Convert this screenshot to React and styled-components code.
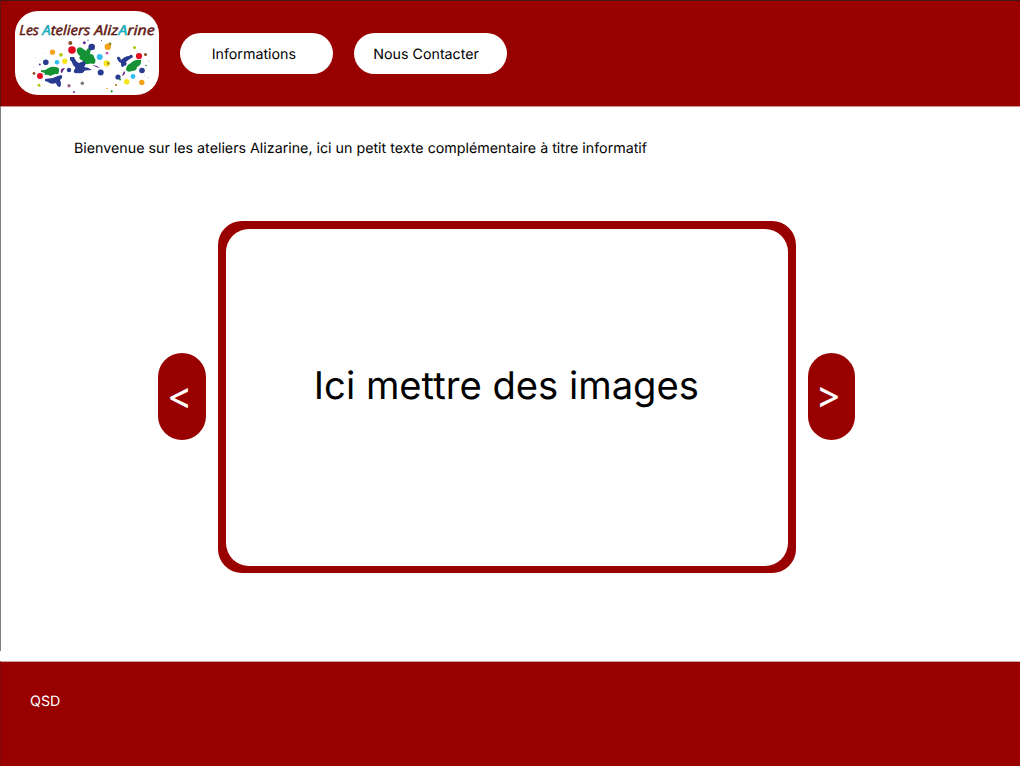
import React from "react";
import styled, { createGlobalStyle } from "styled-components";

const RED = "#990000";

const GlobalStyle = createGlobalStyle`
  * { box-sizing: border-box; }
  body {
    margin: 0;
    background: #fff;
    color: #000;
    font-family: Inter, "Liberation Sans", sans-serif;
    text-rendering: geometricPrecision;
  }
  button { text-rendering: inherit; }
`;

const Page = styled.div`
  display: flex;
  flex-direction: column;
  width: 1020px;
  height: 766px;
  overflow: hidden;
  background: linear-gradient(#808080, #808080) 0 0 / 1px 651px no-repeat, #fff;
`;

const Header = styled.header`
  display: flex;
  align-items: flex-start;
  flex: none;
  height: 107px;
  padding: 10px 0 0 14px;
  background: ${RED};
  border-top: 1px solid #431414;
  border-left: 1px solid #5c1414;
  border-bottom: 1px solid #d49393;
`;

const LogoCard = styled.a`
  display: block;
  width: 143.5px;
  height: 84px;
  border-radius: 23px;
  background: #fff;
  overflow: hidden;

  svg { display: block; }
`;

const Nav = styled.nav`
  display: flex;
  gap: 21px;
  margin: 22px 0 0 21.2px;
`;

const NavButton = styled.button`
  width: 153.3px;
  height: 41px;
  padding: 3px 0 0 ${(p) => p.$inset}px;
  border: 0;
  border-radius: 21px;
  background: #fff;
  color: #000;
  font: 400 14.25px/38px Inter, sans-serif;
  text-align: left;
  white-space: nowrap;
`;

const Main = styled.main`
  flex: 1;
  padding-top: 33px;
`;

const Intro = styled.p`
  margin: 0 0 0 74px;
  font-size: 14.25px;
  line-height: 18px;
  white-space: nowrap;
`;

const Carousel = styled.section`
  display: flex;
  align-items: center;
  gap: 12px;
  margin: 63px 0 0 158.3px;
`;

const Arrow = styled.button`
  width: 47.6px;
  height: 87px;
  margin-bottom: 2px;
  padding: ${(p) => p.$pad};
  border: 0;
  border-radius: 24px;
  background: ${RED};
  color: #fff;
  font: 400 38.2px/1 Inter, sans-serif;
  text-align: center;
`;

const Slide = styled.div`
  display: flex;
  justify-content: center;
  width: 578px;
  height: 352px;
  padding-top: 133px;
  border: 8px solid ${RED};
  border-bottom-width: 7px;
  border-radius: 24px;
  background: ${RED};
  position: relative;
  isolation: isolate;

  &::before {
    content: "";
    position: absolute;
    inset: 0;
    z-index: -1;
    border-radius: 23px;
    background: #fff;
  }
`;

const SlideText = styled.p`
  margin: 0 1px 0 0;
  font-size: 38.2px;
  line-height: 48px;
  white-space: nowrap;
`;

const Footer = styled.footer`
  flex: none;
  height: 105px;
  padding: 31px 0 0 29px;
  border-top: 1px solid #cfa5a5;
  border-left: 1px solid #800808;
  background: ${RED};
  color: #fff;
  font-size: 14.25px;
  line-height: 17px;
`;

const BLUE = "#293b90";
const GREEN = "#159235";
const PURPLE = "#6c2c91";
const CYAN = "#32bdf0";
const YELLOW = "#f7e51c";
const ORANGE = "#f5a21b";
const CRIMSON = "#e30b1f";
const BROWN = "#8c4e24";
const LIME = "#b7c60b";

const drops = [
  [70.3, 43, 2, BROWN], [72, 50, 3.8, CRIMSON], [52.5, 52.2, 2.6, ORANGE], [61, 54.8, 1.9, LIME],
  [84.3, 42.7, 1.5, PURPLE], [91.7, 47, 3.3, BLUE], [107.8, 46.7, 3.2, ORANGE], [110, 43.8, 1.4, "#8b8b12"],
  [45.8, 62.2, 2.8, BLUE], [57, 62.3, 2.3, CYAN], [64.8, 61.3, 2.7, YELLOW], [39.8, 64.6, 1, PURPLE],
  [99.7, 57, 3, CYAN], [107, 53.2, 1.4, "#c45bad"], [106.7, 63.4, 3.1, YELLOW], [108.3, 63.4, 1.3, "#9b9034"],
  [34, 73.4, 1.4, BROWN], [40, 76, 3, CRIMSON], [39, 85.3, 1.5, LIME], [69, 70, 2.2, BLUE],
  [100.7, 72.4, 3, BLUE], [82.3, 83.3, 1.7, "#777"], [69, 85.7, 1.7, "#9b668c"], [74, 92, 1, PURPLE],
  [139, 56, 3.1, CRIMSON], [145.5, 54.6, 1.5, BROWN], [134.5, 47.5, 1.5, LIME], [142, 70.5, 2.8, BLUE],
  [133, 76.5, 2.4, CYAN], [126.7, 81.7, 2.7, YELLOW], [141.8, 82.4, 2.7, ORANGE], [118, 77, 2.6, BLUE],
  [116, 85, 1.1, "#b56b20"], [111.7, 91.3, 1.1, GREEN], [107, 88.5, 0.8, ORANGE], [120, 79.5, 1, GREEN],
  [146, 65.5, 0.8, GREEN], [88, 40.2, 0.6, BLUE], [101.5, 40.5, 0.5, BLUE], [79, 37.8, 0.5, "#aaa"],
  [36, 57.5, 0.4, "#999"], [45, 53.5, 0.4, "#999"], [40, 60, 0.4, "#aaa"], [34, 67, 0.5, "#999"],
  [149, 61, 0.5, "#999"], [152, 68, 0.5, "#ccc"], [148, 77.5, 0.5, "#aaa"], [145, 75, 0.5, "#aaa"],
];

const splats = [
  [GREEN, "M77 49Q79 46 82 48L86 51Q88 46 91 49L90 54Q94 54 94 57Q97 61 94 64Q91 63 88 64Q84 65 82 60Q78 59 80 56Q76 53 77 49Z"],
  [BLUE, "M70 57L74 57Q76 62 79 63L84 61Q87 64 84 67Q88 67 92 70L85 70.5Q83 74 78 73Q73 74 74 70Q77 68 73 65Q72 61 70 60Z"],
  [GREEN, "M41 70Q44 71 47 69Q51 66 55 67Q60 67 59 71Q59 75 55 74L50 76Q48 74 44 75Q47 73 41 72Z"],
  [BLUE, "M45 79L53 78Q57 76 61 75Q64 77 60 80Q62 84 60 87Q57 87 56 83Q51 85 48 82L45 81Z"],
  [BLUE, "M117 57Q120 56 121 60Q125 56 129 56Q132 53 133 57Q128 60 126 62Q128 65 124 66Q121 69 121 63Q117 61 117 57Z"],
  [GREEN, "M126 70Q126 65 131 63Q135 59 141 60Q142 65 137 67Q137 71 132 71Q128 73 126 70Z"],
  [PURPLE, "M61 70Q61 68 65 68Q63 71 62 73Q60 73 61 70Z"],
  [PURPLE, "M92 65L97 66L100 68L96 67Z"],
  [PURPLE, "M124 71Q126 72 124 75L122 76Q123 73 124 71Z"],
];

const WordMark = styled.g`
  font: italic 500 13.6px "Open Sans", sans-serif;
  fill: #9b2117;
  stroke: #421610;
  stroke-width: 0.5px;

  tspan {
    fill: #11d5e8;
    stroke: #1592a1;
  }
`;

function Logo() {
  return (
    <svg width="143.5" height="84" viewBox="15 11 143.5 84" role="img" aria-label="Les Ateliers AlizArine">
      <WordMark>
        <text x="19.3" y="35.4" textLength="19.5" lengthAdjust="spacingAndGlyphs">Les</text>
        <text x="42.3" y="35.4" textLength="48" lengthAdjust="spacingAndGlyphs"><tspan>A</tspan>teliers</text>
        <text x="94.2" y="35.4" textLength="60.5" lengthAdjust="spacingAndGlyphs">Aliz<tspan>A</tspan>rine</text>
      </WordMark>
      {splats.map(([color, d]) => <path key={d} d={d} fill={color} />)}
      {drops.map(([x, y, r, color]) => <circle key={`${x}-${y}`} cx={x} cy={y} r={r} fill={color} />)}
    </svg>
  );
}

export default function App() {
  return (
    <Page>
      <GlobalStyle />
      <Header>
        <LogoCard><Logo /></LogoCard>
        <Nav>
          <NavButton $inset={32}>Informations</NavButton>
          <NavButton $inset={19.3}>Nous Contacter</NavButton>
        </Nav>
      </Header>
      <Main>
        <Intro>Bienvenue sur les ateliers Alizarine, ici un petit texte complémentaire à titre informatif</Intro>
        <Carousel>
          <Arrow $pad="1px 5px 0 0">&lt;</Arrow>
          <Slide><SlideText>Ici mettre des images</SlideText></Slide>
          <Arrow $pad="0 6.4px 2px 0">&gt;</Arrow>
        </Carousel>
      </Main>
      <Footer>QSD</Footer>
    </Page>
  );
}
